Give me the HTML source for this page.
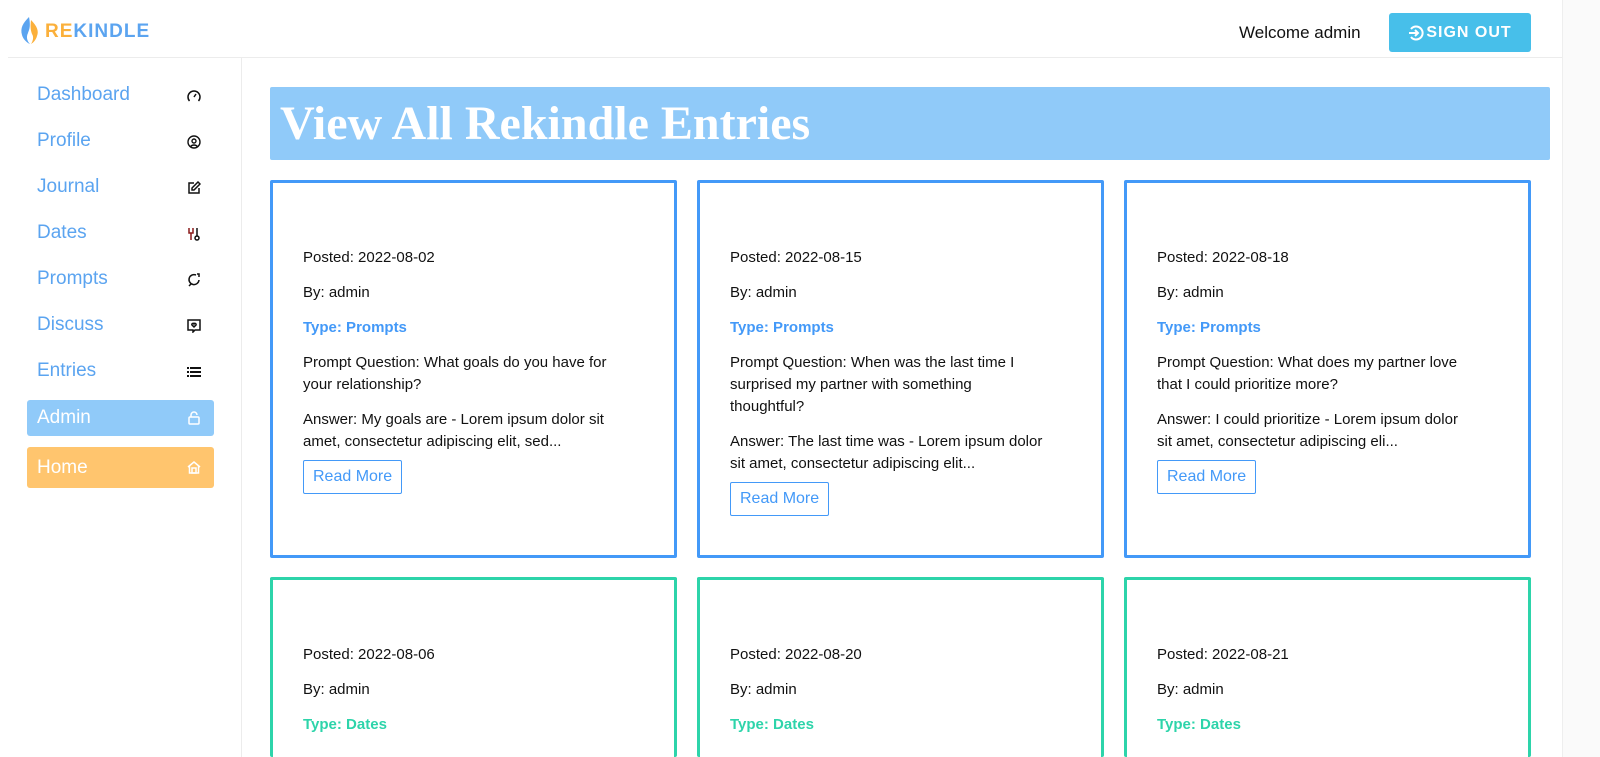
<!DOCTYPE html>
<html style="overflow:hidden;width:1600px;height:757px"><head><meta charset="utf-8"><style>
*{box-sizing:border-box;margin:0;padding:0}
html,body{overflow:hidden}
body{width:1600px;height:757px;background:#fff;font-family:"Liberation Sans",sans-serif;position:relative}
.hline{position:absolute;left:8px;top:57px;width:1554px;height:1px;background:#ececec}
.logo{position:absolute;left:19px;top:16px}
.logotext{position:absolute;left:45px;top:21px;font-weight:bold;font-size:19px;letter-spacing:1px}
.welcome{position:absolute;left:1239px;top:23px;font-size:17px;color:#111}
.so{position:absolute;left:1389px;top:13px;width:142px;height:39px;background:#47bfea;border-radius:3px;color:#fff;font-weight:bold;font-size:16px;letter-spacing:1px;display:flex;align-items:center;justify-content:center;gap:2px}
.side{position:absolute;left:241px;top:58px;width:1px;height:699px;background:#ececec}
.rp{position:absolute;left:1562px;top:0;width:38px;height:757px;background:#fafafa;border-left:1px solid #eee}
.nav{position:absolute;left:37px;font-size:19px;color:#5ba4f0}
.ic{position:absolute;left:187px;width:14px;height:14px}
.pill{position:absolute;left:27px;width:187px;border-radius:3px;color:#fff;font-size:19px;padding-left:10px;display:flex;align-items:center}
.banner{position:absolute;left:270px;top:87px;width:1280px;height:73px;background:#90caf9;border-radius:2px;color:#fff;font-family:"Liberation Serif",serif;font-weight:bold;font-size:48px;padding-left:10px;line-height:73px}
.card{position:absolute;width:407px;border:3px solid #4399f8;border-radius:2px;padding:64px 0 0 30px;font-size:15px;color:#111;line-height:22px;overflow:hidden}
.card p{margin-bottom:13px;width:318px}
.card .t{font-weight:bold;color:#4399f8}
.g{border-color:#2dd4aa}.g .t{color:#2dd4aa}
.rm{display:inline-block;border:1px solid #4399f8;color:#4399f8;border-radius:2px;font-size:16px;padding:5px 9px;margin-top:-8px}
</style></head><body>
<svg class="logo" width="22" height="30" viewBox="0 0 22 30"><path d="M10 1C4 7 1 12 3 19c1 4 5 8 8 9-3-3-4-7-2-11 1-3 3-6 1-16z" fill="#5ba4f0"/><path d="M12 4c6 6 8 11 6 16-1 4-4 7-6 8 2-3 3-7 1-10-1-3-2-6-1-14z" fill="#fbb03b"/></svg>
<div class="logotext"><span style="color:#fbb03b">RE</span><span style="color:#5ba4f0">KINDLE</span></div>
<div class="welcome">Welcome admin</div>
<div class="so"><svg width="16" height="16" viewBox="0 0 16 16" fill="none" stroke="#fff" stroke-width="2"><path d="M3 4A6.5 6.5 0 1 1 3 12"/><path d="M1 8h9M7 5l3 3-3 3"/></svg>SIGN OUT</div>
<div class="hline"></div>
<div class="side"></div>
<div class="rp"></div>

<div class="nav" style="top:84px">Dashboard</div>
<svg class="ic" style="top:89px" viewBox="0 0 14 14" fill="none" stroke="#111" stroke-width="1.5"><path d="M2.5 12A6 6 0 1 1 11.5 12"/><path d="M7 8l2-3"/></svg>
<div class="nav" style="top:130px">Profile</div>
<svg class="ic" style="top:135px" viewBox="0 0 14 14" fill="none" stroke="#111" stroke-width="1.4"><circle cx="7" cy="7" r="6"/><circle cx="7" cy="6" r="2"/><path d="M3.5 11.5c2-2 5-2 7 0"/></svg>
<div class="nav" style="top:176px">Journal</div>
<svg class="ic" style="top:181px" viewBox="0 0 14 14" fill="none" stroke="#111" stroke-width="1.5"><path d="M7 2H2v10h10V7"/><path d="M11 1l2 2-6 6H5V7z"/></svg>
<div class="nav" style="top:222px">Dates</div>
<svg class="ic" style="top:227px" viewBox="0 0 14 14" fill="none" stroke="#111" stroke-width="1.5"><path d="M2 1v5h4V1M4 6v7" stroke="#8a1a1a"/><path d="M10 1v8"/><circle cx="10" cy="11" r="2"/></svg>
<div class="nav" style="top:268px">Prompts</div>
<svg class="ic" style="top:273px" viewBox="0 0 14 14" fill="none" stroke="#111" stroke-width="1.5"><path d="M9 2A5 5 0 1 0 12 7M2 13l2-2"/><path d="M10 1h2v3"/></svg>
<div class="nav" style="top:314px">Discuss</div>
<svg class="ic" style="top:319px" viewBox="0 0 14 14" fill="none" stroke="#111" stroke-width="1.5"><path d="M1 1h12v10H8l-2 2v-2H1z"/><path d="M7 8L5 6a1 1 0 0 1 2-1 1 1 0 0 1 2 1z"/></svg>
<div class="nav" style="top:360px">Entries</div>
<svg class="ic" style="top:365px" viewBox="0 0 14 14" fill="#111"><rect x="0" y="2" width="2" height="2"/><rect x="3" y="2" width="11" height="2"/><rect x="0" y="6" width="2" height="2"/><rect x="3" y="6" width="11" height="2"/><rect x="0" y="10" width="2" height="2"/><rect x="3" y="10" width="11" height="2"/></svg>
<div class="pill" style="top:400px;height:36px;background:#90caf9">Admin</div>
<svg class="ic" style="top:411px" viewBox="0 0 14 14" fill="none" stroke="#fff" stroke-width="1.5"><rect x="2" y="6" width="10" height="7" rx="1"/><path d="M4 6V4a3 3 0 0 1 6 0"/></svg>
<div class="pill" style="top:447px;height:41px;background:#ffc56e">Home</div>
<svg class="ic" style="top:460px" viewBox="0 0 14 14" fill="none" stroke="#fff" stroke-width="1.5"><path d="M1 7l6-5 6 5M2.5 6v7h9V6"/><rect x="5" y="8" width="4" height="5"/></svg>

<div class="banner">View All Rekindle Entries</div>

<div class="card" style="left:270px;top:180px;height:378px"><p>Posted: 2022-08-02</p><p>By: admin</p><p class="t">Type: Prompts</p><p>Prompt Question: What goals do you have for your relationship?</p><p>Answer: My goals are - Lorem ipsum dolor sit amet, consectetur adipiscing elit, sed...</p><span class="rm">Read More</span></div>
<div class="card" style="left:697px;top:180px;height:378px"><p>Posted: 2022-08-15</p><p>By: admin</p><p class="t">Type: Prompts</p><p>Prompt Question: When was the last time I surprised my partner with something thoughtful?</p><p>Answer: The last time was - Lorem ipsum dolor sit amet, consectetur adipiscing elit...</p><span class="rm">Read More</span></div>
<div class="card" style="left:1124px;top:180px;height:378px"><p>Posted: 2022-08-18</p><p>By: admin</p><p class="t">Type: Prompts</p><p>Prompt Question: What does my partner love that I could prioritize more?</p><p>Answer: I could prioritize - Lorem ipsum dolor sit amet, consectetur adipiscing eli...</p><span class="rm">Read More</span></div>

<div class="card g" style="left:270px;top:577px;height:180px;border-bottom:none"><p>Posted: 2022-08-06</p><p>By: admin</p><p class="t">Type: Dates</p></div>
<div class="card g" style="left:697px;top:577px;height:180px;border-bottom:none"><p>Posted: 2022-08-20</p><p>By: admin</p><p class="t">Type: Dates</p></div>
<div class="card g" style="left:1124px;top:577px;height:180px;border-bottom:none"><p>Posted: 2022-08-21</p><p>By: admin</p><p class="t">Type: Dates</p></div>
</body></html>
